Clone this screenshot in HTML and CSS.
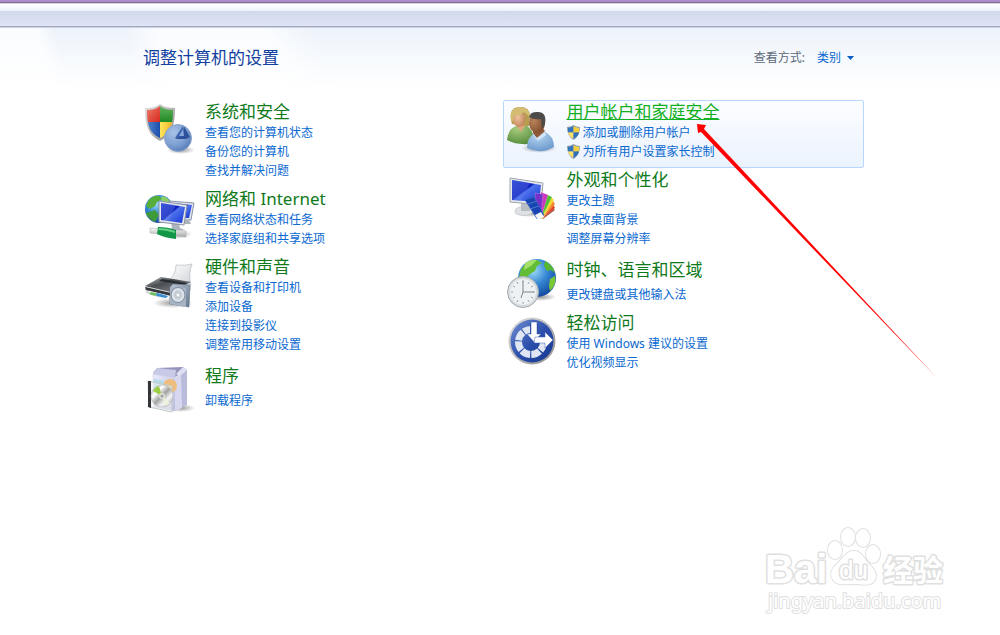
FILE: index.html
```html
<!DOCTYPE html>
<html lang="zh-CN">
<head>
<meta charset="utf-8">
<title>控制面板</title>
<link rel="stylesheet" href="styles.css">
</head>
<body>
<div class="frame-edge"></div>
<div class="toolbar"></div>
<main class="panel">
  <header class="panel-head">
    <h1 class="panel-title">调整计算机的设置</h1>
    <div class="view">
      <label class="view-label" for="view-mode">查看方式:</label>
      <span class="view-field">
        <select class="view-select" id="view-mode"><option>类别</option></select>
        <svg class="view-caret" viewBox="0 0 7 4" aria-hidden="true"><path d="M0 0h7L3.500 4z" fill="#0a5fc4"/></svg>
      </span>
    </div>
  </header>

  <div class="columns">
    <div class="column">
      <section class="category">
        <svg class="icon" viewBox="0 0 50 50" aria-hidden="true">
          <defs>
            <linearGradient id="rim" x1="0" y1="0" x2="1" y2="1"><stop offset="0" stop-color="#e4e4e4"/><stop offset="1" stop-color="#8b8b8b"/></linearGradient>
            <radialGradient id="disc" cx=".35" cy=".3" r=".8"><stop offset="0" stop-color="#a9c3e6"/><stop offset=".6" stop-color="#7b9dd0"/><stop offset="1" stop-color="#5276b4"/></radialGradient>
            <clipPath id="shield-in"><path d="M15 2C11 5 7 6 2 6C2 20 4 29 15 34C26 29 28 20 28 6C23 6 19 5 15 2z"/></clipPath>
            <radialGradient id="shadow"><stop offset="0" stop-color="#555" stop-opacity=".6"/><stop offset="1" stop-color="#555" stop-opacity="0"/></radialGradient>
            <linearGradient id="red" x1="0" y1="0" x2="1" y2="1"><stop offset="0" stop-color="#ee8a78"/><stop offset="1" stop-color="#d8281c"/></linearGradient>
            <linearGradient id="grn" x1="0" y1="0" x2="0" y2="1"><stop offset="0" stop-color="#6db765"/><stop offset="1" stop-color="#1f8a22"/></linearGradient>
            <linearGradient id="yel" x1="0" y1="0" x2="1" y2="0"><stop offset="0" stop-color="#ffe75a"/><stop offset="1" stop-color="#e9a81e"/></linearGradient>
            <linearGradient id="blu" x1="0" y1="0" x2="1" y2="0"><stop offset="0" stop-color="#5b8ed0"/><stop offset="1" stop-color="#1c4fae"/></linearGradient>
          </defs>
          <ellipse cx="36" cy="46" rx="14" ry="4" fill="url(#shadow)"/>
          <path d="M15 0C11 3 6 4 0 4C0 21 3 31 15 37C27 31 30 21 30 4C24 4 19 3 15 0z" fill="url(#rim)"/>
          <g clip-path="url(#shield-in)"><path d="M0 0h15v18H0z" fill="url(#red)"/><path d="M15 0h15v18H15z" fill="url(#grn)"/><path d="M0 18h15v19H0z" fill="url(#blu)"/><path d="M15 18h15v19H15z" fill="url(#yel)"/></g>
          <circle cx="33" cy="34" r="13.500" fill="url(#disc)" stroke="#8ea6cd"/>
          <path d="M38 22L30 34H41z" fill="#3c63ad"/><path d="M39 22.500L45 33L41 35H30L39 31z" fill="#2d519b"/><path d="M38 25L34 32H39z" fill="#86a7d9"/>
        </svg>
        <div class="category-body">
          <h2 class="category-title"><a href="#security">系统和安全</a></h2>
          <ul class="tasks"><li><a href="#status">查看您的计算机状态</a></li><li><a href="#backup">备份您的计算机</a></li><li><a href="#troubleshoot">查找并解决问题</a></li></ul>
        </div>
      </section>

      <section class="category">
        <svg class="icon" viewBox="0 0 50 50" aria-hidden="true">
          <defs>
            <radialGradient id="ocean" cx=".4" cy=".3" r=".75"><stop offset="0" stop-color="#9fdcf8"/><stop offset=".5" stop-color="#3486d3"/><stop offset="1" stop-color="#12439b"/></radialGradient>
            <linearGradient id="screen" x1="0" y1="0" x2="1" y2="1"><stop offset="0" stop-color="#1c38cc"/><stop offset=".45" stop-color="#0b1fc0"/><stop offset=".5" stop-color="#4d73ee"/><stop offset="1" stop-color="#1534cf"/></linearGradient>
            <linearGradient id="pipe" x1="0" y1="0" x2="0" y2="1"><stop offset="0" stop-color="#fafafa"/><stop offset="1" stop-color="#a5a9a8"/></linearGradient>
          </defs>
          <ellipse cx="30" cy="43" rx="17" ry="5" fill="url(#shadow)"/>
          <circle cx="14" cy="18" r="14" fill="url(#ocean)"/>
          <path d="M3 10Q8 4 14 5L17 8L12 11L10 15L5 18L1 15z" fill="#57ae3b"/><path d="M4 21L10 19L14 24L10 31Q3 28 1 22z" fill="#3f9b39"/><path d="M17 5Q23 6 25 11L20 12L16 9z" fill="#8bd060"/>
          <path d="M24 10L49 12L46 29L27 29z" fill="#dfe4ec" stroke="#8994a8"/><path d="M27 12L47 14L44 27L28 27z" fill="url(#screen)"/>
          <path d="M26 31L34 32L35 37L40 39L24 39L27 37z" fill="#aeb4bd"/><path d="M40 29L44 29L46 33L39 33z" fill="#aeb4bd"/>
          <path d="M14 10L42 14L39 34L14 31z" fill="#e5e9ef" stroke="#8992a3"/><path d="M16 12L40 16L37 32L16 29z" fill="url(#screen)"/><path d="M16 12L31 14L23 30L16 29z" fill="#8ea4f2" opacity=".28"/>
          <path d="M5 37L41 40V46L5 42z" fill="url(#pipe)" stroke="#a7abae" stroke-width=".5"/><path d="M13 36Q23 36 31 39V48Q20 47 12 43z" fill="#119648"/><path d="M14 37Q22 37 30 40V42Q21 39 13 39z" fill="#67cf83"/>
        </svg>
        <div class="category-body">
          <h2 class="category-title"><a href="#network">网络和 Internet</a></h2>
          <ul class="tasks"><li><a href="#netstatus">查看网络状态和任务</a></li><li><a href="#homegroup">选择家庭组和共享选项</a></li></ul>
        </div>
      </section>

      <section class="category">
        <svg class="icon" viewBox="0 0 50 50" aria-hidden="true">
          <defs>
            <linearGradient id="printer" x1="0" y1="0" x2="1" y2="1"><stop offset="0" stop-color="#c3c5c7"/><stop offset=".4" stop-color="#4a4d51"/><stop offset="1" stop-color="#8f9499"/></linearGradient>
            <linearGradient id="paper" x1="0" y1="0" x2="1" y2="1"><stop offset="0" stop-color="#ffffff"/><stop offset="1" stop-color="#cfd3d8"/></linearGradient>
            <linearGradient id="speaker" x1="0" y1="0" x2="1" y2="1"><stop offset="0" stop-color="#b9c5d3"/><stop offset="1" stop-color="#66788d"/></linearGradient>
          </defs>
          <ellipse cx="28" cy="44" rx="20" ry="5" fill="url(#shadow)"/>
          <path d="M31 6Q40 7 47 5Q43 15 46 26L25 20Q31 15 31 6z" fill="url(#paper)" stroke="#b6babf" stroke-width=".7"/>
          <path d="M0 28L16 18L46 23L46 31L25 42L1 34z" fill="#d6d8da"/>
          <path d="M0 27L16 18L46 23L26 33z" fill="url(#printer)"/><path d="M17 20L42 24L40 26L14 22z" fill="#292c30"/>
          <path d="M0 28L26 34V37L1 31z" fill="#35383c"/><path d="M4 32L25 37L23 41L5 35z" fill="#f7fafb"/><path d="M6 33L13 34.500L10 37L4 35z" fill="#71bd61"/><path d="M12 34L23 37L21 39L11 37z" fill="#388ed5"/>
          <path d="M25 28L28 25L45 26L44 48L25 45z" fill="url(#speaker)" stroke="#657487" stroke-width=".6"/><path d="M25 28L41 29L41 48L25 45z" fill="#a7b4c3"/>
          <ellipse cx="33" cy="36" rx="7" ry="7.500" fill="#dce2e8" stroke="#7b8a9c"/><ellipse cx="33" cy="36" rx="4" ry="4.500" fill="#c3cbd4"/><circle cx="33" cy="36" r="1.500" fill="#fff"/>
        </svg>
        <div class="category-body">
          <h2 class="category-title"><a href="#hardware">硬件和声音</a></h2>
          <ul class="tasks"><li><a href="#devices">查看设备和打印机</a></li><li><a href="#add">添加设备</a></li><li><a href="#projector">连接到投影仪</a></li><li><a href="#mobility">调整常用移动设置</a></li></ul>
        </div>
      </section>

      <section class="category category-short">
        <svg class="icon" viewBox="0 0 50 50" aria-hidden="true">
          <defs>
            <linearGradient id="box" x1="0" y1="0" x2="1" y2="1"><stop offset="0" stop-color="#e9eafb"/><stop offset="1" stop-color="#babde0"/></linearGradient>
            <linearGradient id="cd" x1="0" y1="0" x2="1" y2="1"><stop offset="0" stop-color="#a9aaa9"/><stop offset=".3" stop-color="#fff"/><stop offset=".5" stop-color="#a0a3a0"/><stop offset=".7" stop-color="#f6f6f6"/><stop offset="1" stop-color="#919491"/></linearGradient>
          </defs>
          <ellipse cx="36" cy="43" rx="14" ry="4" fill="url(#shadow)"/>
          <path d="M8 8L12 3L38 2L42 5L30 12z" fill="#9395bb"/><path d="M8 9L30 13V46L9 42z" fill="url(#box)" stroke="#c0c2dc" stroke-width=".5"/>
          <path d="M30 13L42 5V40L30 46z" fill="#b9bbdb"/><path d="M30 13L36 9L37 43L30 46z" fill="#d7d8ef"/><path d="M12 3L31 5L30 13L8 9z" fill="#c9cae7"/><path d="M31 9L38 2L42 5L35 11z" fill="#dedff2"/>
          <circle cx="25" cy="21" r="7" fill="#efbd7d"/><path d="M9 14L19 16L17 25L9 23z" fill="#b3dbea"/>
          <path d="M3 16L27 21V47L4 42z" fill="#edf1ef" fill-opacity=".55" stroke="#c1cbc6"/><path d="M3 16H6V43L3 42z" fill="#323438"/>
          <circle cx="17" cy="31" r="11" fill="url(#cd)" stroke="#aaadab" stroke-width=".5"/><path d="M17 31L8 26Q10 22 14 21z" fill="#9bce45"/><path d="M17 31L25 38Q23 40 20 41z" fill="#edf0da"/><circle cx="17" cy="31" r="3" fill="#dedfdb"/><circle cx="17" cy="31" r="1.500" fill="#9da09b"/>
        </svg>
        <div class="category-body">
          <h2 class="category-title"><a href="#programs">程序</a></h2>
          <ul class="tasks"><li><a href="#uninstall">卸载程序</a></li></ul>
        </div>
      </section>
    </div>

    <div class="column">
      <section class="category category-active">
        <svg class="icon" viewBox="0 0 50 50" aria-hidden="true">
          <defs>
            <radialGradient id="green-top" cx=".4" cy=".2" r=".9"><stop offset="0" stop-color="#a7cc7d"/><stop offset="1" stop-color="#508738"/></radialGradient>
            <radialGradient id="blue-top" cx=".4" cy=".2" r=".9"><stop offset="0" stop-color="#b6d5f1"/><stop offset="1" stop-color="#6493c8"/></radialGradient>
            <radialGradient id="face" cx=".4" cy=".4" r=".7"><stop offset="0" stop-color="#efc39c"/><stop offset="1" stop-color="#bd8058"/></radialGradient>
            <radialGradient id="face-dark" cx=".3" cy=".4" r=".8"><stop offset="0" stop-color="#b9835a"/><stop offset="1" stop-color="#754326"/></radialGradient>
          </defs>
          <ellipse cx="32" cy="44" rx="18" ry="5" fill="url(#shadow)"/>
          <path d="M0 36Q1 25 9 22L19 21Q26 26 27 34L22 40Q8 41 0 36z" fill="url(#green-top)"/><path d="M9 21L14 28L19 21z" fill="#dca77c"/>
          <path d="M4 16Q2 3 13 3Q23 3 23 12L22 22H18L5 20z" fill="#b89c50"/><ellipse cx="12" cy="15" rx="6" ry="8" fill="url(#face)"/><path d="M4 17Q2 3 13 3Q23 3 23 13L17 8Q11 13 7 11L6 17z" fill="#d4bd72"/>
          <path d="M20 44Q20 33 28 29L38 28Q47 32 47 43Q34 51 20 44z" fill="url(#blue-top)"/><path d="M26 29L30 34L38 27L35 23L26 24z" fill="#925939"/><path d="M25 30L30 34L38 28L39 31L31 37z" fill="#d3e5f5"/>
          <ellipse cx="30" cy="19" rx="8" ry="10" fill="url(#face-dark)"/><path d="M22 15Q22 7 31 8Q40 8 38 20L35 25L34 15Q27 16 22 13z" fill="#4b4b4a"/>
        </svg>
        <div class="category-body">
          <h2 class="category-title"><a href="#users">用户帐户和家庭安全</a></h2>
          <ul class="tasks">
            <li><svg class="shield" viewBox="0 0 14 16" aria-hidden="true"><path d="M7 0Q4 2 0 2Q0 12 7 16Q14 12 14 2Q10 2 7 0z" fill="#8c9eae"/><path d="M7 1V8H1V3Q4 3 7 1z" fill="#3476bd"/><path d="M7 1V8H13V3Q10 3 7 1z" fill="#f4cf3e"/><path d="M1 8H7V15Q2 12 1 8z" fill="#ffe168"/><path d="M7 8H13Q12 12 7 15z" fill="#316fb7"/></svg><a href="#adduser">添加或删除用户帐户</a></li>
            <li><svg class="shield" viewBox="0 0 14 16" aria-hidden="true"><path d="M7 0Q4 2 0 2Q0 12 7 16Q14 12 14 2Q10 2 7 0z" fill="#8c9eae"/><path d="M7 1V8H1V3Q4 3 7 1z" fill="#3476bd"/><path d="M7 1V8H13V3Q10 3 7 1z" fill="#f4cf3e"/><path d="M1 8H7V15Q2 12 1 8z" fill="#ffe168"/><path d="M7 8H13Q12 12 7 15z" fill="#316fb7"/></svg><a href="#parental">为所有用户设置家长控制</a></li>
          </ul>
        </div>
      </section>

      <section class="category">
        <svg class="icon" viewBox="0 0 50 50" aria-hidden="true">
          <ellipse cx="24" cy="41" rx="18" ry="4" fill="url(#shadow)"/>
          <ellipse cx="17" cy="39" rx="9" ry="4.500" fill="#dfe1e5" stroke="#b6b9bf" stroke-width=".6"/><path d="M14 29L23 30V39H14z" fill="#b9bdc4"/>
          <path d="M3 6L36 11L34 33L3 30z" fill="#e5e8ec" stroke="#9fa5b0"/><path d="M5 8L34 13L32 30L5 28z" fill="url(#screen)"/><path d="M5 8L23 11L14 29L5 28z" fill="#6a80ea" opacity=".35"/>
          <g stroke="#fff" stroke-width=".2">
            <path d="M32 46L46 36L48 38L36 47z" fill="#9c4336"/><path d="M31 46L46 31L48 36L35 47z" fill="#e23d20"/><path d="M31 46L45 27L48 32L35 47z" fill="#ef8522"/><path d="M30 46L43 24L47 28L35 47z" fill="#f5d62e"/><path d="M30 46L39 22L45 25L34 47z" fill="#4ec331"/><path d="M29 45L34 20L41 23L34 46z" fill="#cf36bd"/><path d="M28 44L28 21L36 22L34 46z" fill="#7632c9"/>
          </g>
          <path d="M18 28L27 25L37 43L30 47z" fill="#1746b2" stroke="#3d69c6" stroke-width=".5"/><path d="M21 32L30 29M23 37L32 34" stroke="#4d78cc"/><path d="M28 43L34 40L37 45L31 48z" fill="#f5f5f5"/>
        </svg>
        <div class="category-body">
          <h2 class="category-title"><a href="#appearance">外观和个性化</a></h2>
          <ul class="tasks"><li><a href="#theme">更改主题</a></li><li><a href="#wallpaper">更改桌面背景</a></li><li><a href="#resolution">调整屏幕分辨率</a></li></ul>
        </div>
      </section>

      <section class="category category-short">
        <svg class="icon" viewBox="0 0 50 50" aria-hidden="true">
          <ellipse cx="34" cy="38" rx="15" ry="4" fill="url(#shadow)"/>
          <circle cx="30" cy="19" r="19" fill="url(#ocean)"/>
          <path d="M14 10Q20 1 30 1L35 4L30 7L28 12L23 15L18 20L12 18z" fill="#62bd35"/><path d="M18 4Q24 0 30 1L24 7L17 11z" fill="#a3df69"/><path d="M38 2Q46 6 48 14L44 11L40 12L37 7z" fill="#57b62f"/><path d="M43 20L48 17Q50 25 43 32L42 27z" fill="#79c936"/>
          <circle cx="16" cy="33" r="15.500" fill="#d9dddf" stroke="#a6adb1"/><circle cx="16" cy="33" r="13.500" fill="#eff2f4" stroke="#cbd1d4" stroke-width=".6"/>
          <path d="M16 21v2M16 43v2M4 33h2M26 33h2M10 23l1 2M22 23l-1 2M10 43l1-2M22 43l-1-2M6 27l2 1M26 27l-2 1M6 39l2-1M26 39l-2-1" stroke="#9da4a8"/><path d="M16 22V33H27M16 33L14 39" fill="none" stroke="#7b858b"/>
        </svg>
        <div class="category-body">
          <h2 class="category-title"><a href="#clock">时钟、语言和区域</a></h2>
          <ul class="tasks"><li><a href="#keyboard">更改键盘或其他输入法</a></li></ul>
        </div>
      </section>

      <section class="category">
        <svg class="icon" viewBox="0 0 50 50" aria-hidden="true">
          <defs><linearGradient id="ease" x1="0" y1="0" x2="1" y2="1"><stop offset="0" stop-color="#7490d2"/><stop offset=".5" stop-color="#2d50ad"/><stop offset="1" stop-color="#17378f"/></linearGradient></defs>
          <circle cx="25" cy="26" r="23.500" fill="url(#rim)"/><circle cx="25" cy="26" r="21.500" fill="url(#ease)"/>
          <circle cx="24" cy="27" r="12.500" fill="none" stroke="#dfe5f2" stroke-width="7" stroke-dasharray="9 1.200 9 1.200 9 1.200 9 1.200 9 1.200 9 60"/>
          <path d="M23 8H31V19H23z" fill="#2b4ca7"/>
          <path d="M24 7H30V19H34L27 27L20 19H24z" fill="#fff" stroke="#3e5fb2" stroke-width=".5"/><path d="M28 22H38V17L46 25L38 33V28H27z" fill="#fff" stroke="#3e5fb2" stroke-width=".5"/>
        </svg>
        <div class="category-body">
          <h2 class="category-title"><a href="#ease-of-access">轻松访问</a></h2>
          <ul class="tasks"><li><a href="#suggest">使用 Windows 建议的设置</a></li><li><a href="#display">优化视频显示</a></li></ul>
        </div>
      </section>
    </div>
  </div>
</main>

<svg class="pointer" viewBox="0 0 242 256" aria-hidden="true"><path d="M1 0L10 1L8 5L241 254L5 8L2 9z" fill="#f00"/></svg>

<svg class="watermark" viewBox="0 0 190 100" role="img" aria-label="Baidu 经验">
  <g class="watermark-shapes">
    <ellipse cx="80" cy="30" rx="7" ry="9"/><ellipse cx="93" cy="17" rx="7" ry="9"/><ellipse cx="108" cy="18" rx="7" ry="9"/><ellipse cx="118" cy="34" rx="7" ry="9"/>
    <path d="M99 31C91 31 88 38 82 44C75 50 75 55 78 60C82 66 91 64 99 64C107 64 116 67 120 60C123 53 118 48 113 43C108 37 106 31 99 31z"/>
  </g>
  <text class="mark-latin" x="10" y="63">Bai</text>
  <text class="mark-du" x="84" y="59">du</text>
  <text class="mark-cjk" x="128" y="61">经验</text>
  <text class="mark-url" x="13" y="88">jingyan.baidu.com</text>
</svg>
</body>
</html>
```
FILE: styles.css
```css
* {
  box-sizing: border-box;
}

body {
  position: relative;
  margin: 0;
  min-height: 100vh;
  overflow-x: hidden;
  background: #fff;
  font: 12px/19px "Noto Sans", "Noto Sans CJK SC", sans-serif;
}

a {
  color: #0a68d0;
  text-decoration: none;
}

a:hover {
  text-decoration: underline;
}

.frame-edge {
  height: 4px;
  background: linear-gradient(#ab8bca 0 2px, #806d94 2px 3px, #d9d3e2 3px);
}

.toolbar {
  height: 24px;
  border-bottom: 1px solid #ccd4e3;
  box-shadow: inset 0 -1px #a2a9bd;
  background: linear-gradient(#fff, #edf2fa 7px, #d2d8ec 7px, #dfe5f6);
}

.panel {
  padding: 18px 136px 40px 141px;
  background:
    linear-gradient(to bottom, transparent, #fff),
    linear-gradient(75deg, #fafcfe 50px, #edf3fb 68px, #edf3fb 135px, #f9fbfe 165px, #fafcfe 270px, #edf3fb 320px);
  background-repeat: no-repeat;
  background-size: 100% 60px;
}

.panel-head {
  display: flex;
  align-items: center;
  justify-content: space-between;
  margin-bottom: 31px;
  padding: 0 10px 0 2px;
}

.panel-title {
  margin: 0;
  color: #12409f;
  font-size: 17px;
  font-weight: 400;
  line-height: 23px;
}

.view {
  display: flex;
  gap: 12px;
}

.view-label {
  color: #5a6878;
}

.view-field {
  display: flex;
  align-items: center;
  gap: 5px;
}

.view-select {
  appearance: none;
  padding: 0;
  border: 0;
  background: none;
  color: #0a68d0;
  font: inherit;
}

.view-caret {
  width: 7px;
  height: 4px;
}

.columns {
  display: grid;
  grid-template-columns: 1fr 1fr;
}

.category {
  display: flex;
  gap: 10px;
  padding: 0 3px 6px;
  border: 1px solid transparent;
  border-radius: 2px;
}

.icon {
  flex: none;
  width: 50px;
  height: 50px;
  margin: 3px 0 -6px;
}

.category-title {
  margin: 0;
  font-size: 17px;
  font-weight: 400;
  line-height: 22px;
}

.category-title a {
  color: #0f7a1a;
}

.category-short .category-body {
  padding-top: 3px;
}

.category-short .tasks {
  margin-top: 4px;
}

.category-active {
  border-color: #b9d7fc;
  background: linear-gradient(#fcfdff, #ebf3fe);
}

.category-active .category-title a {
  color: #12b022;
  text-decoration: underline;
}

.tasks {
  margin: 0;
  padding: 0;
  list-style: none;
}

.tasks li {
  display: flex;
  align-items: center;
  gap: 3px;
}

.shield {
  width: 13px;
  height: 15px;
}

.pointer {
  position: absolute;
  top: 124px;
  left: 696px;
  width: 242px;
  height: 256px;
  pointer-events: none;
}

.watermark {
  position: absolute;
  top: 520px;
  left: 755px;
  width: 190px;
  height: 100px;
  overflow: visible;
  fill: #fff;
  stroke: #e0e0e0;
  stroke-width: 2px;
  stroke-linejoin: round;
  paint-order: stroke;
}

.mark-latin,
.mark-du {
  font: 700 40px "Liberation Sans", sans-serif;
  stroke-width: 3px;
}

.mark-du {
  font-size: 26px;
  font-weight: 400;
}

.mark-cjk {
  font: 700 30px "Noto Sans CJK SC", sans-serif;
  stroke-width: 3px;
}

.mark-url {
  font: 400 20px "Noto Sans", sans-serif;
}
```
